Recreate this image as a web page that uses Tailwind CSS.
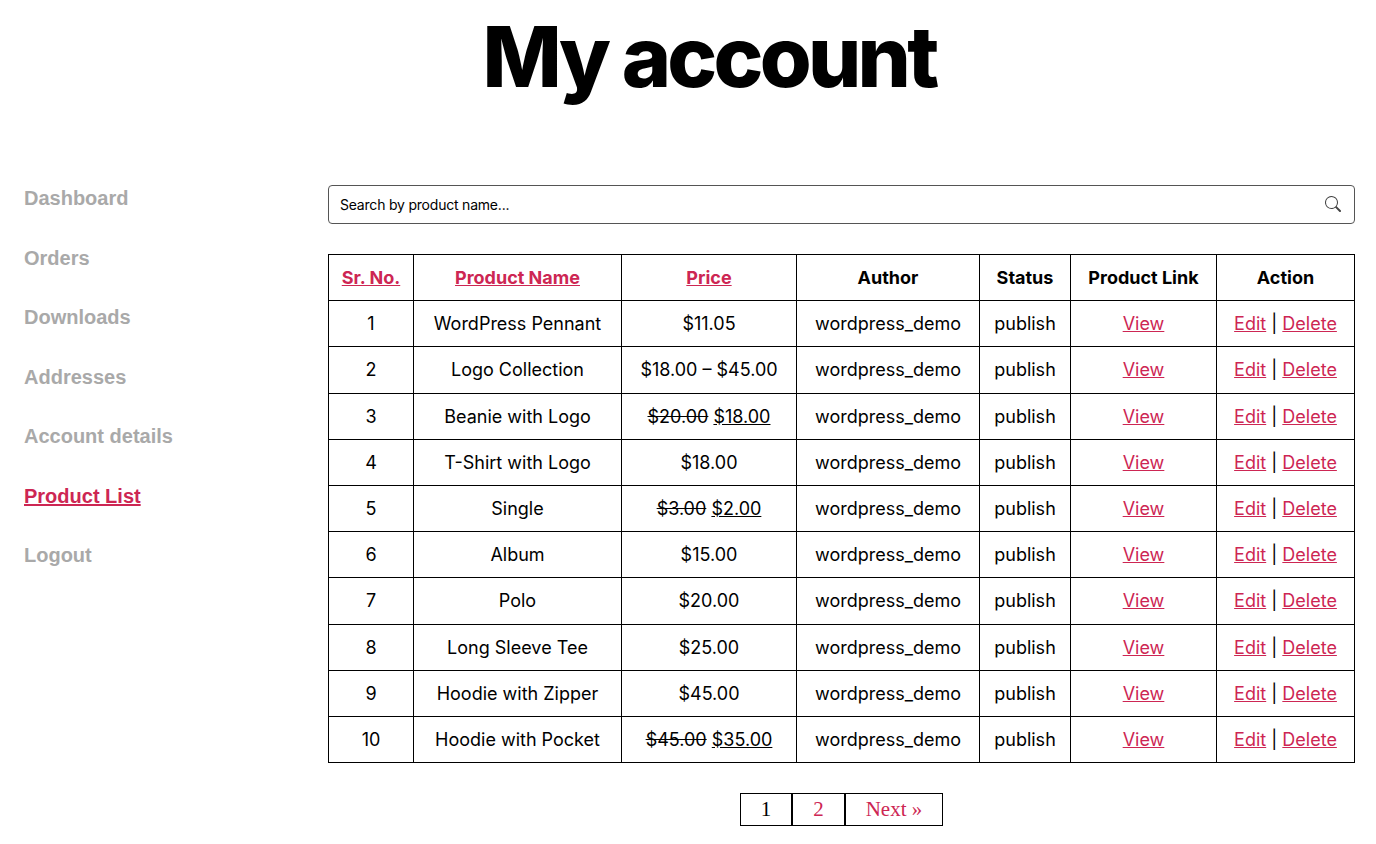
<!DOCTYPE html>
<html lang="en">
<head>
<meta charset="utf-8">
<title>My account</title>
<script src="https://cdn.jsdelivr.net/npm/@tailwindcss/browser@4"></script>
</head>
<body class="bg-white font-['Inter',sans-serif] text-black">
<h1 class="pt-[9px] pl-[42px] text-center text-[84px] leading-[96px] font-extrabold tracking-[-0.045em]">My account</h1>
<main class="flex items-start pt-20 pr-[21px] pl-6">
  <nav aria-label="Account" class="w-[304px] shrink-0 font-['Liberation_Sans',sans-serif] text-xl leading-snug font-bold text-[#a9a9a9]">
    <ul class="flex flex-col gap-8">
      <li><a href="#">Dashboard</a></li>
      <li><a href="#">Orders</a></li>
      <li><a href="#">Downloads</a></li>
      <li><a href="#">Addresses</a></li>
      <li><a href="#">Account details</a></li>
      <li><a href="#" class="text-[#cd2653] underline">Product List</a></li>
      <li><a href="#">Logout</a></li>
    </ul>
  </nav>
  <section class="min-w-0 flex-1">
    <form class="flex h-[39px] items-center rounded border border-[#555] pr-[13px] pl-[11px]">
      <input type="text" aria-label="Search by product name" placeholder="Search by product name..." class="min-w-0 flex-1 text-sm tracking-[-0.015em] outline-none placeholder:text-black">
      <button type="button" aria-label="Search" class="pb-0.5"><svg class="block size-4" viewBox="0 0 16 16" fill="#444"><path d="M11.742 10.344a6.5 6.5 0 1 0-1.397 1.398h-.001c.03.04.062.078.098.115l3.85 3.85a1 1 0 0 0 1.415-1.414l-3.85-3.85a1.007 1.007 0 0 0-.115-.1zM12 6.5a5.5 5.5 0 1 1-11 0 5.5 5.5 0 0 1 11 0z"/></svg></button>
    </form>
    <table class="mt-[30px] w-full table-fixed border-collapse text-center text-lg leading-[1.4] [&_a]:text-[#cd2653] [&_a]:underline [&_td]:border [&_td]:border-black [&_td]:py-2.5 [&_th]:border [&_th]:border-black [&_th]:py-2.5">
      <thead>
        <tr><th class="w-[85px]"><a href="#">Sr. No.</a></th><th class="w-[208px]"><a href="#">Product Name</a></th><th class="w-[175px]"><a href="#">Price</a></th><th class="w-[183px]">Author</th><th class="w-[91px]">Status</th><th class="w-[146px]">Product Link</th><th class="w-[138px]">Action</th></tr>
      </thead>
      <tbody>
        <tr><td>1</td><td>WordPress Pennant</td><td>$11.05</td><td>wordpress_demo</td><td>publish</td><td><a href="#">View</a></td><td><a href="#">Edit</a> | <a href="#">Delete</a></td></tr>
        <tr><td>2</td><td>Logo Collection</td><td>$18.00 – $45.00</td><td>wordpress_demo</td><td>publish</td><td><a href="#">View</a></td><td><a href="#">Edit</a> | <a href="#">Delete</a></td></tr>
        <tr><td>3</td><td>Beanie with Logo</td><td><del>$20.00</del> <ins>$18.00</ins></td><td>wordpress_demo</td><td>publish</td><td><a href="#">View</a></td><td><a href="#">Edit</a> | <a href="#">Delete</a></td></tr>
        <tr><td>4</td><td>T-Shirt with Logo</td><td>$18.00</td><td>wordpress_demo</td><td>publish</td><td><a href="#">View</a></td><td><a href="#">Edit</a> | <a href="#">Delete</a></td></tr>
        <tr><td>5</td><td>Single</td><td><del>$3.00</del> <ins>$2.00</ins></td><td>wordpress_demo</td><td>publish</td><td><a href="#">View</a></td><td><a href="#">Edit</a> | <a href="#">Delete</a></td></tr>
        <tr><td>6</td><td>Album</td><td>$15.00</td><td>wordpress_demo</td><td>publish</td><td><a href="#">View</a></td><td><a href="#">Edit</a> | <a href="#">Delete</a></td></tr>
        <tr><td>7</td><td>Polo</td><td>$20.00</td><td>wordpress_demo</td><td>publish</td><td><a href="#">View</a></td><td><a href="#">Edit</a> | <a href="#">Delete</a></td></tr>
        <tr><td>8</td><td>Long Sleeve Tee</td><td>$25.00</td><td>wordpress_demo</td><td>publish</td><td><a href="#">View</a></td><td><a href="#">Edit</a> | <a href="#">Delete</a></td></tr>
        <tr><td>9</td><td>Hoodie with Zipper</td><td>$45.00</td><td>wordpress_demo</td><td>publish</td><td><a href="#">View</a></td><td><a href="#">Edit</a> | <a href="#">Delete</a></td></tr>
        <tr><td>10</td><td>Hoodie with Pocket</td><td><del>$45.00</del> <ins>$35.00</ins></td><td>wordpress_demo</td><td>publish</td><td><a href="#">View</a></td><td><a href="#">Edit</a> | <a href="#">Delete</a></td></tr>
      </tbody>
    </table>
    <nav aria-label="Pages" class="mt-[30px] flex justify-center font-['Liberation_Serif',serif] text-[21px] leading-[31px]">
      <span aria-current="page" class="border border-black px-5">1</span>
      <a href="#" class="border border-black px-5 text-[#cd2653]">2</a>
      <a href="#" class="border border-black px-5 text-[#cd2653]">Next »</a>
    </nav>
  </section>
</main>
</body>
</html>
